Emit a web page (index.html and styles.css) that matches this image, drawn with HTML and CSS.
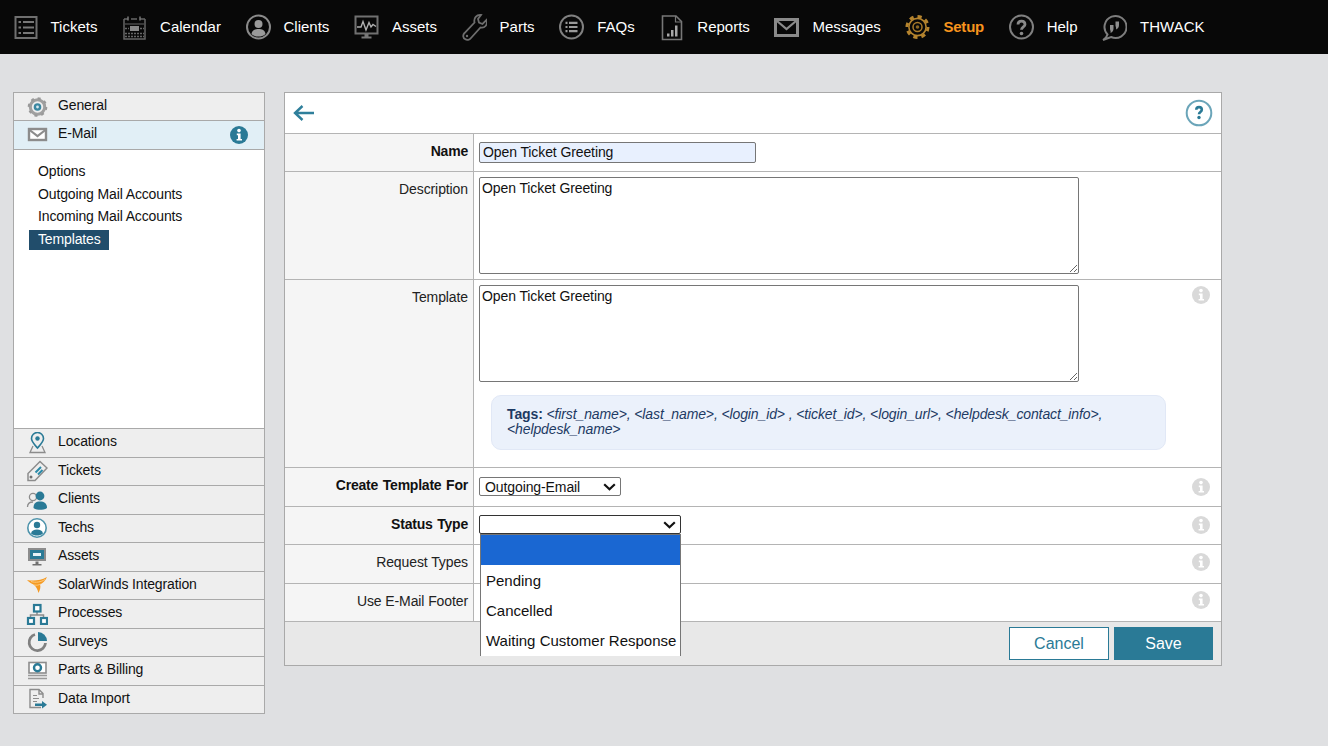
FILE: index.html
```html
<!DOCTYPE html>
<html lang="en">
<head>
<meta charset="utf-8">
<title>Setup - Templates</title>
<link rel="stylesheet" href="styles.css">
</head>
<body>
<svg class="defs" width="0" height="0" aria-hidden="true">
  <symbol id="info" viewBox="0 0 18 18">
    <circle cx="9" cy="9" r="9"/>
    <circle cx="9" cy="4.6" r="1.8" fill="#fff"/>
    <path d="M6.8 7.6H10.6V13H12V14.6H6.6V13H8V9.2H6.8Z" fill="#fff"/>
  </symbol>
</svg>

<header class="topbar">
  <a class="nav-item">
    <svg class="nav-icon" viewBox="0 0 25 28"><rect x="2.5" y="4" width="21" height="21" fill="none" stroke="#6f6f6f" stroke-width="2"/><path d="M5.5 9H8M10 9H21M5.5 14.5H8M10 14.5H21M5.5 20H8M10 20H21" stroke="#777" stroke-width="2"/></svg>
    <span>Tickets</span>
  </a>
  <a class="nav-item">
    <svg class="nav-icon" viewBox="0 0 25 28"><path d="M2 6H6M9 6H15M18 6H23M2 6V26H23V6" fill="none" stroke="#666" stroke-width="1.5"/><path d="M6 3.5V7.5M18 3.5V7.5" stroke="#777" stroke-width="1.5"/><path d="M3 11H22" stroke="#666"/><rect x="8" y="13" width="9" height="5" fill="#888"/><path d="M3 15.5H7M18 15.5H22M3 20.5H22M3 23.5H22" stroke="#666" stroke-width="1.5" stroke-dasharray="2 1"/></svg>
    <span>Calendar</span>
  </a>
  <a class="nav-item">
    <svg class="nav-icon" viewBox="0 0 25 28"><circle cx="12.5" cy="14" r="11.5" fill="none" stroke="#8a8a8a" stroke-width="2"/><circle cx="12.5" cy="11" r="4" fill="#9a9a9a"/><path d="M5.5 21C6 17 9 16 12.5 16S19 17 19.5 21C17.5 23 15 23.5 12.5 23.5S7.5 23 5.5 21Z" fill="#9a9a9a"/></svg>
    <span>Clients</span>
  </a>
  <a class="nav-item">
    <svg class="nav-icon" viewBox="0 0 25 28"><rect x="1.5" y="3.5" width="22" height="17" fill="none" stroke="#707070" stroke-width="2"/><path d="M3 14H7L9 8.5L12 17L15 9.5L17 14L19 11.5L22 13.5" fill="none" stroke="#b0b0b0" stroke-width="1.4"/><path d="M10.5 21H14.5V23.5H17.5V25.5H7.5V23.5H10.5Z" fill="#777"/></svg>
    <span>Assets</span>
  </a>
  <a class="nav-item">
    <svg class="nav-icon" viewBox="0 0 25 28"><path d="M19 2C14.5 1.5 11.5 5 12.5 9.5L2.5 20C.5 22 1 25 3 26C5 27.5 7.5 27 9 25L18.5 14.5C22.5 15.5 26 12 24.5 7L20.5 11L17 9.5L16 6Z" fill="none" stroke="#6e6e6e" stroke-width="1.8"/><circle cx="5" cy="23" r="1.2" fill="#6e6e6e"/></svg>
    <span>Parts</span>
  </a>
  <a class="nav-item">
    <svg class="nav-icon" viewBox="0 0 25 28"><circle cx="12.5" cy="14" r="11.5" fill="none" stroke="#808080" stroke-width="2"/><path d="M6.5 9.8H8.5M10 9.8H18.5M6.5 14H8.5M10 14H18.5M6.5 18.2H8.5M10 18.2H18.5" stroke="#9a9a9a" stroke-width="2.2"/></svg>
    <span>FAQs</span>
  </a>
  <a class="nav-item">
    <svg class="nav-icon" viewBox="0 0 25 28"><path d="M3.5 3H17L22.5 8.5V26.5H3.5Z" fill="none" stroke="#777" stroke-width="1.6"/><path d="M16.5 3V9H22.5" fill="none" stroke="#777" stroke-width="1.2"/><path d="M8 20.5H10.5V23.5H8ZM12 17H14.5V23.5H12ZM16 12.5H18.5V23.5H16Z" fill="#a8a8a8"/></svg>
    <span>Reports</span>
  </a>
  <a class="nav-item">
    <svg class="nav-icon" viewBox="0 0 25 28"><rect x="1.5" y="6.5" width="22" height="16" fill="none" stroke="#8a8a8a" stroke-width="3"/><path d="M3 8L12.5 16L22 8" fill="none" stroke="#8a8a8a" stroke-width="2.2"/></svg>
    <span>Messages</span>
  </a>
  <a class="nav-item nav-active">
    <svg class="nav-icon" viewBox="0 0 25 28"><circle cx="12.5" cy="14" r="10.5" fill="none" stroke="#b5842e" stroke-width="3" stroke-dasharray="4.2 4"/><circle cx="12.5" cy="14" r="8.6" fill="none" stroke="#b5842e" stroke-width="1.6"/><circle cx="12.5" cy="14" r="4.5" fill="none" stroke="#a87a2a" stroke-width="1.5"/><circle cx="12.5" cy="14" r="1.8" fill="#8a6622"/></svg>
    <span>Setup</span>
  </a>
  <a class="nav-item">
    <svg class="nav-icon" viewBox="0 0 25 28"><circle cx="12.5" cy="14" r="11.5" fill="none" stroke="#808080" stroke-width="2"/><path d="M9 11.5C9 7 16 7 16 11.5C16 14 12.5 14 12.5 16.8" fill="none" stroke="#8a8a8a" stroke-width="2.8"/><circle cx="12.5" cy="20.5" r="1.8" fill="#8a8a8a"/></svg>
    <span>Help</span>
  </a>
  <a class="nav-item">
    <svg class="nav-icon" viewBox="0 0 25 28"><path d="M5.5 21.5A11 11 0 1 1 9 24L1 27C3.5 25.5 5 23.5 5.5 21.5Z" fill="none" stroke="#7d7d7d" stroke-width="2"/><path d="M8 12H11.5V15.5C11.5 17.5 10.5 19 8.5 20C9 18 8 17 8 16ZM13.5 8.5H17V12C17 14 16 15.5 14 16.5C14.5 14.5 13.5 13.5 13.5 12.5Z" fill="#8f8f8f"/></svg>
    <span>THWACK</span>
  </a>
</header>

<div class="page">
  <aside class="sidebar">
    <div class="side-row side-first">
      <svg class="side-icon" viewBox="0 0 22 22"><circle cx="11.5" cy="11" r="7.2" fill="none" stroke="#a0a0a0" stroke-width="3"/><circle cx="11.5" cy="11" r="8.8" fill="none" stroke="#999" stroke-width="2" stroke-dasharray="3 3.9"/><circle cx="11.5" cy="11" r="3.8" fill="#3b87a1"/><circle cx="11.5" cy="11" r="1.4" fill="#d8e8ee"/></svg>
      <span class="side-label">General</span>
    </div>
    <div class="side-row side-open">
      <svg class="side-icon" viewBox="0 0 22 22"><rect x="3" y="5" width="17" height="11" fill="#fff" stroke="#8c8c8c" stroke-width="2.4"/><path d="M3 5.5L11.5 12L20 5.5" fill="none" stroke="#8c8c8c" stroke-width="2.2"/></svg>
      <span class="side-label">E-Mail</span>
      <svg class="side-info"><use href="#info"/></svg>
    </div>
    <nav class="side-menu">
      <a class="menu-link">Options</a>
      <a class="menu-link">Outgoing Mail Accounts</a>
      <a class="menu-link">Incoming Mail Accounts</a>
      <a class="menu-link menu-current">Templates</a>
    </nav>
    <div class="side-row">
      <svg class="side-icon" viewBox="0 0 22 22"><path d="M11.5 16C8 12 5.5 9.5 5.5 6.5A6 6 0 0 1 17.5 6.5C17.5 9.5 15 12 11.5 16Z" fill="none" stroke="#2a7a96" stroke-width="1.6"/><circle cx="11.5" cy="6.5" r="2.2" fill="#2a7a96"/><path d="M7 14L4 20.5H19L16 14" fill="none" stroke="#8c8c8c" stroke-width="1.3"/></svg>
      <span class="side-label">Locations</span>
    </div>
    <div class="side-row">
      <svg class="side-icon" viewBox="0 0 22 22"><path d="M14 1.5L21 8L9 20.5H2V13.5Z" fill="none" stroke="#8c8c8c" stroke-width="1.5"/><circle cx="5" cy="17" r="1.5" fill="#707070"/><path d="M9.5 12.5L15 7M12 14.5L16.5 10" stroke="#2a8aa8" stroke-width="2"/></svg>
      <span class="side-label">Tickets</span>
    </div>
    <div class="side-row">
      <svg class="side-icon" viewBox="0 0 22 22"><circle cx="7" cy="8" r="3.6" fill="none" stroke="#8c8c8c" stroke-width="1.3"/><path d="M1.5 18C1.5 14 4 13 7 13" fill="none" stroke="#8c8c8c" stroke-width="1.3"/><circle cx="14" cy="7" r="4.4" fill="#2a7a96"/><path d="M7.5 19C7.5 14 10 12.5 14 12.5S21 14 21 19C19 20.5 16 20.8 14 20.8S9.5 20.5 7.5 19Z" fill="#2a7a96"/></svg>
      <span class="side-label">Clients</span>
    </div>
    <div class="side-row">
      <svg class="side-icon" viewBox="0 0 22 22"><circle cx="11" cy="11" r="9.2" fill="#fff" stroke="#4d93ab" stroke-width="1.6"/><circle cx="11" cy="8" r="3.2" fill="#2a7a96"/><path d="M5 16.5C5.5 13.5 8 12.5 11 12.5S16.5 13.5 17 16.5C15.5 18 13 18.6 11 18.6S6.5 18 5 16.5Z" fill="#2a7a96"/></svg>
      <span class="side-label">Techs</span>
    </div>
    <div class="side-row">
      <svg class="side-icon" viewBox="0 0 22 22"><rect x="2" y="2" width="18" height="13" fill="#2a7a96"/><rect x="3" y="3" width="16" height="11" fill="none" stroke="#8c8c8c" stroke-width="2"/><rect x="7" y="7" width="8" height="3" fill="#e8f3f7"/><path d="M9.5 15.5H12.5V18H15.5V19.5H6.5V18H9.5Z" fill="#707070"/></svg>
      <span class="side-label">Assets</span>
    </div>
    <div class="side-row">
      <svg class="side-icon" viewBox="0 0 22 22"><path d="M1 6C7 7 14 7 21 3C19 7 17 9 14 10.5C15 13 14 16 12.5 19C11.5 15 10 12.5 7.5 10.5C5.5 9.5 3 8 1 6Z" fill="#f59a23"/><path d="M5 7.5C10 9 15 8 19 5.5M8 11C11 11.5 13 11 14.5 10" fill="none" stroke="#fdd08a" stroke-width=".9"/></svg>
      <span class="side-label">SolarWinds Integration</span>
    </div>
    <div class="side-row">
      <svg class="side-icon" viewBox="0 0 22 22"><path d="M11 8V12M4.5 15V12H17.5V15" fill="none" stroke="#8c8c8c" stroke-width="1.5"/><rect x="8" y="2" width="6.5" height="6.5" fill="#fff" stroke="#2a7a96" stroke-width="2.2"/><rect x="2" y="15" width="6" height="6" fill="#fff" stroke="#2a7a96" stroke-width="2.2"/><rect x="15" y="15" width="6" height="6" fill="#fff" stroke="#2a7a96" stroke-width="2.2"/></svg>
      <span class="side-label">Processes</span>
    </div>
    <div class="side-row">
      <svg class="side-icon" viewBox="0 0 22 22"><path d="M9 3.5A8.2 8.2 0 1 0 19.5 12" fill="none" stroke="#808080" stroke-width="2.8"/><path d="M12 1A9 9 0 0 1 21 10H12Z" fill="#2a7a96"/></svg>
      <span class="side-label">Surveys</span>
    </div>
    <div class="side-row">
      <svg class="side-icon" viewBox="0 0 22 22"><rect x="3" y="2.5" width="17" height="10.5" fill="#fff" stroke="#8c8c8c" stroke-width="1.6"/><circle cx="11.5" cy="7.8" r="3.5" fill="none" stroke="#2a7a96" stroke-width="2.4"/><path d="M2 15.5H21M2 18.500H21" stroke="#9a9a9a" stroke-width="1.5"/></svg>
      <span class="side-label">Parts &amp; Billing</span>
    </div>
    <div class="side-row">
      <svg class="side-icon" viewBox="0 0 22 22"><path d="M15 19.5H4V1.5H13L17 5.5V10M13 1.5V6H17" fill="none" stroke="#8c8c8c" stroke-width="1.4"/><path d="M7 7.5H11M7 10.5H13M7 13.5H11" stroke="#8c8c8c" stroke-width="1.2"/><path d="M9 15.5H16V13L21 16.8L16 20.5V18H9Z" fill="#2a7a96"/></svg>
      <span class="side-label">Data Import</span>
    </div>
  </aside>

  <main class="panel">
    <div class="panel-head">
      <svg class="back-icon" viewBox="0 0 22 18"><path d="M21 9H2M9.5 2L2 9L9.5 16" fill="none" stroke="#2f7f9b" stroke-width="2.4"/></svg>
      <svg class="help-icon" viewBox="0 0 28 28"><circle cx="14" cy="14" r="12.3" fill="#fff" stroke="#6ba5b9" stroke-width="2"/><path d="M11.3 10.8C11.3 7.2 16.8 7.2 16.8 10.8C16.8 13 14 13 14 15.2" fill="none" stroke="#2a7a96" stroke-width="2.6"/><circle cx="14" cy="18.5" r="1.7" fill="#2a7a96"/></svg>
    </div>

    <div class="row row-name">
      <label class="row-label strong">Name</label>
      <div class="row-value"><input class="text-input" type="text" value="Open Ticket Greeting"></div>
    </div>
    <div class="row row-desc">
      <label class="row-label">Description</label>
      <div class="row-value"><textarea class="text-area">Open Ticket Greeting</textarea></div>
    </div>
    <div class="row row-template">
      <label class="row-label">Template</label>
      <div class="row-value">
        <textarea class="text-area">Open Ticket Greeting</textarea>
        <p class="tags"><b>Tags:</b> <i>&lt;first_name&gt;, &lt;last_name&gt;, &lt;login_id&gt; , &lt;ticket_id&gt;, &lt;login_url&gt;, &lt;helpdesk_contact_info&gt;, &lt;helpdesk_name&gt;</i></p>
      </div>
      <svg class="row-info info-template"><use href="#info"/></svg>
    </div>
    <div class="row row-create">
      <label class="row-label strong">Create Template For</label>
      <div class="row-value"><select class="select select-create"><option>Outgoing-Email</option></select></div>
      <svg class="row-info"><use href="#info"/></svg>
    </div>
    <div class="row row-status">
      <label class="row-label strong">Status Type</label>
      <div class="row-value value-status">
        <select class="select select-status"><option></option></select>
        <ul class="dropdown">
          <li class="dropdown-on">&nbsp;</li>
          <li>Pending</li>
          <li>Cancelled</li>
          <li>Waiting Customer Response</li>
        </ul>
      </div>
      <svg class="row-info info-status"><use href="#info"/></svg>
    </div>
    <div class="row row-request">
      <label class="row-label">Request Types</label>
      <div class="row-value"></div>
      <svg class="row-info info-request"><use href="#info"/></svg>
    </div>
    <div class="row row-footer">
      <label class="row-label">Use E-Mail Footer</label>
      <div class="row-value"></div>
      <svg class="row-info info-footer"><use href="#info"/></svg>
    </div>

    <div class="panel-foot">
      <button class="btn btn-cancel">Cancel</button>
      <button class="btn btn-save">Save</button>
    </div>
  </main>
</div>
</body>
</html>
```

FILE: styles.css
```css
* { box-sizing: border-box; }

html, body { margin: 0; padding: 0; }

body {
  height: 746px;
  overflow: hidden;
  background: #dfe0e2;
  color: #111;
  font: 14px/16px "Liberation Sans", Arial, sans-serif;
}

.defs { position: absolute; }

/* top bar */
.topbar {
  display: flex;
  align-items: center;
  gap: 24.6px;
  height: 54px;
  padding-left: 12.5px;
  background: #080808;
}

.nav-item {
  display: flex;
  align-items: center;
  gap: 13px;
  color: #fff;
  font-size: 15px;
  white-space: nowrap;
}

.nav-active { color: #f7941d; font-weight: 700; letter-spacing: -.2px; }

.nav-icon { width: 25px; height: 28px; flex: none; }

/* page */
.page {
  display: flex;
  align-items: flex-start;
  gap: 19px;
  padding: 38px 0 0 13px;
}

/* sidebar */
.sidebar {
  display: flex;
  flex-direction: column;
  width: 252px;
  height: 622px;
  border: 1px solid #a9a9a9;
  border-bottom: 0;
  background: #eee;
  letter-spacing: -.13px;
}

.side-row {
  display: flex;
  flex: none;
  align-items: center;
  height: 28.5px;
  padding: 0 16px 0 12px;
  border-bottom: 1px solid #a9a9a9;
}

.side-first { height: 28px; }

.side-open { height: 29px; background: #e1eff6; }

.side-open .side-label { margin-bottom: 5px; }

.side-icon { width: 22px; height: 22px; flex: none; margin-right: 10px; }

.side-label { margin-bottom: 3px; color: #111; }

.side-info { width: 18px; height: 18px; margin-left: auto; fill: #2a7a96; }

.side-menu {
  display: flex;
  flex: 1;
  flex-direction: column;
  align-items: flex-start;
  padding: 11px 0 0 15px;
  border-bottom: 1px solid #a9a9a9;
  background: #fff;
}

.menu-link {
  height: 22.5px;
  padding: 2px 9px 0;
  color: #111;
}

.menu-current {
  height: 20px;
  margin-top: 1px;
  padding: 1px 8px 0 9px;
  background: #214d6b;
  color: #fff;
}

/* main panel */
.panel {
  width: 938px;
  height: 574px;
  border: 1px solid #a9a9a9;
  background: #fff;
}

.panel-head {
  display: flex;
  align-items: center;
  justify-content: space-between;
  height: 41px;
  padding: 0 8px;
  border-bottom: 1px solid #b4b4b4;
}

.back-icon { width: 22px; height: 18px; }

.help-icon { width: 28px; height: 28px; }

.row {
  display: flex;
  border-bottom: 1px solid #b4b4b4;
}

.row-name { height: 38px; }
.row-desc { height: 108px; }
.row-template { height: 188px; }
.row-create { height: 39px; }
.row-status { height: 38px; }
.row-request { height: 39px; }
.row-footer { height: 38px; }

.row-label {
  flex: none;
  width: 189px;
  padding: 9px 5px 0 0;
  border-right: 1px solid #b4b4b4;
  background: #f5f5f5;
  color: #222;
  letter-spacing: -.1px;
  text-align: right;
}

.strong { color: #111; font-weight: 700; letter-spacing: -.22px; word-spacing: 1px; }

.row-value { flex: 1; padding: 8px 0 0 5px; }

.row-desc .row-value, .row-template .row-value { padding-top: 5px; }

.row-create .row-value { padding-top: 9px; }

.value-status { position: relative; }

.row-info {
  flex: none;
  width: 18px;
  height: 18px;
  margin: 10px 11px 0 0;
  fill: #d9d9d9;
}

.info-template { margin-top: 6px; }
.info-status { margin-top: 9px; }
.info-request { margin-top: 8px; }
.info-footer { margin-top: 7px; }

.text-input {
  display: block;
  width: 277px;
  height: 21px;
  padding: 0 3px 2px;
  border: 1px solid #767676;
  border-radius: 2px;
  background: #e8f0fe;
  color: #111;
  font: 14px "Liberation Sans", Arial, sans-serif;
  letter-spacing: -.1px;
}

.text-area {
  display: block;
  width: 600px;
  height: 97px;
  padding: 2px;
  border: 1px solid #767676;
  border-radius: 2px;
  background: #fff;
  color: #111;
  font: 14px/16px "Liberation Sans", Arial, sans-serif;
  letter-spacing: -.1px;
}

.tags {
  width: 675px;
  height: 55px;
  margin: 13px 0 0 12px;
  padding: 11px 15px 0;
  border: 1px solid #e1e8f6;
  border-radius: 10px;
  background: #ebf1fb;
  color: #1d3a63;
  letter-spacing: -.12px;
  line-height: 15px;
}

.select {
  display: block;
  padding: 0 0 0 5px;
  border: 1px solid #767676;
  border-radius: 2px;
  appearance: none;
  background: #fff url("data:image/svg+xml,%3Csvg xmlns='http://www.w3.org/2000/svg' width='13' height='8'%3E%3Cpath d='M1.2 1.2L6.5 6.2L11.8 1.2' fill='none' stroke='%23111' stroke-width='2.2'/%3E%3C/svg%3E") no-repeat right 4px center;
  color: #111;
  font: 14px "Liberation Sans", Arial, sans-serif;
  letter-spacing: -.1px;
}

.select-create { width: 142px; height: 19px; }

.select-status { width: 202px; height: 19px; border-color: #333; }

.dropdown {
  position: absolute;
  top: 27px;
  left: 6px;
  z-index: 2;
  width: 201px;
  height: 122px;
  margin: 0;
  padding: 0;
  overflow: hidden;
  border: 1px solid #767676;
  border-bottom: 0;
  background: #fff;
  color: #111;
  font-size: 15px;
  list-style: none;
}

.dropdown li {
  height: 30px;
  padding: 8px 0 0 5px;
  white-space: nowrap;
}

.dropdown .dropdown-on { background: #1a67d2; }

/* footer */
.panel-foot {
  display: flex;
  justify-content: flex-end;
  gap: 5px;
  height: 43px;
  padding: 5px 8px 0 0;
  background: #e8e8e8;
}

.btn {
  height: 33px;
  padding: 0;
  border: 1px solid #2a7a96;
  font: 16px "Liberation Sans", Arial, sans-serif;
}

.btn-cancel { width: 100px; background: #fff; color: #2a7a96; }

.btn-save { width: 99px; background: #2a7a96; color: #fff; }
```
